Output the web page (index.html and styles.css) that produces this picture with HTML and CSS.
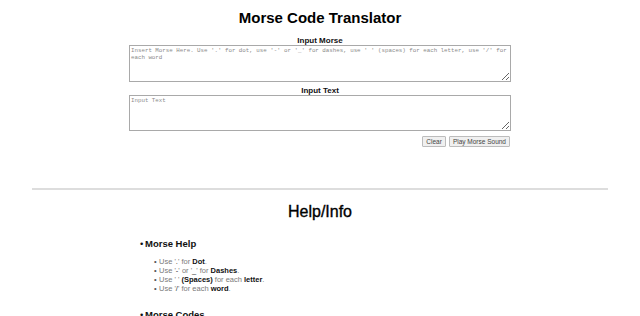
FILE: index.html
```html
<!DOCTYPE html>
<html>
<head>
<meta charset="utf-8">
<title>Morse Code Translator</title>
<link rel="stylesheet" href="styles.css">
</head>
<body>
<main class="translator">
  <h1 class="title">Morse Code Translator</h1>
  <label class="field-label" for="morse">Input Morse</label>
  <textarea id="morse" class="field morse-field" placeholder="Insert Morse Here. Use '.' for dot, use '-' or '_' for dashes, use ' ' (spaces) for each letter, use '/' for each word"></textarea>
  <label class="field-label label-text" for="text">Input Text</label>
  <textarea id="text" class="field text-field" placeholder="Input Text"></textarea>
  <div class="actions">
    <button class="btn" type="button">Clear</button>
    <button class="btn" type="button">Play Morse Sound</button>
  </div>
</main>
<hr class="divider">
<section class="help">
  <h2 class="help-title">Help/Info</h2>
  <ul class="topics">
    <li class="topic"><span class="bullet">•</span>Morse Help
      <ul class="tips">
        <li class="tip"><span class="dot">•</span>Use '<b>.</b>' for <span class="key">Dot</span>.</li>
        <li class="tip"><span class="dot">•</span>Use '<b>-</b>' or '<b>_</b>' for <span class="key">Dashes</span>.</li>
        <li class="tip"><span class="dot">•</span>Use '<b> </b>' <span class="key">(Spaces)</span> for each <span class="key">letter</span>.</li>
        <li class="tip"><span class="dot">•</span>Use '<b>/</b>' for each <span class="key">word</span>.</li>
      </ul>
    </li>
    <li class="topic topic-codes"><span class="bullet">•</span>Morse Codes</li>
  </ul>
</section>
</body>
</html>
```

FILE: styles.css
```css
html, body {
  margin: 0;
  padding: 0;
  background: #ffffff;
}

body {
  font-family: "Liberation Sans", Arial, sans-serif;
  color: #111111;
  overflow: hidden;
}

.translator {
  width: 382px;
  margin: 0 auto;
  display: flex;
  flex-direction: column;
  align-items: stretch;
}

.title {
  margin: 9px 0 0;
  font-size: 15px;
  line-height: 18px;
  font-weight: bold;
  text-align: center;
  color: #000;
}

.field-label {
  display: block;
  margin-top: 9px;
  font-size: 8px;
  line-height: 9px;
  font-weight: bold;
  text-align: center;
  color: #111;
}

.label-text {
  margin-top: 4px;
}

.field {
  display: block;
  box-sizing: border-box;
  width: 382px;
  margin: 0;
  padding: 1px 1px;
  border: 1px solid #a9a9a9;
  font-family: "Liberation Mono", "DejaVu Sans Mono", monospace;
  font-size: 5.8px;
  line-height: 7px;
  color: #222;
  background: #fff;
  resize: both;
}

.field::placeholder {
  color: #8a8a8a;
}

.morse-field {
  height: 37px;
}

.text-field {
  height: 36px;
}

.actions {
  display: flex;
  justify-content: flex-end;
  gap: 3px;
  margin-top: 5px;
  padding-right: 1px;
}

.btn {
  box-sizing: border-box;
  height: 11px;
  padding: 0 3px;
  margin: 0;
  border: 1px solid #bcbcbc;
  border-radius: 1px;
  background: #f0f0f0;
  font-family: "Liberation Sans", Arial, sans-serif;
  font-size: 6.5px;
  line-height: 9px;
  color: #444;
}

.divider {
  width: 576px;
  height: 0;
  margin: 41px auto 0;
  border: 0;
  border-top: 2px solid #dddddd;
}

.help-title {
  margin: 13px 0 0;
  font-size: 16px;
  line-height: 18px;
  font-weight: normal;
  text-align: center;
  color: #000;
  -webkit-text-stroke: 0.35px #000;
}

.topics {
  list-style: none;
  margin: 17px 0 0;
  padding: 0 0 0 140px;
}

.topic {
  font-size: 9.5px;
  line-height: 12px;
  font-weight: bold;
  color: #111;
}

.bullet {
  display: inline-block;
  width: 5px;
  font-weight: normal;
}

.topic-codes {
  margin-top: 16px;
}

.tips {
  list-style: none;
  margin: 7px 0 0;
  padding: 0 0 0 14px;
}

.tip {
  font-size: 7.5px;
  line-height: 9px;
  font-weight: normal;
  color: #7a7a7a;
}

.tip b {
  font-weight: normal;
  color: #333;
}

.dot {
  display: inline-block;
  width: 5px;
  color: #555;
}

.key {
  color: #111;
  font-weight: bold;
}
```
